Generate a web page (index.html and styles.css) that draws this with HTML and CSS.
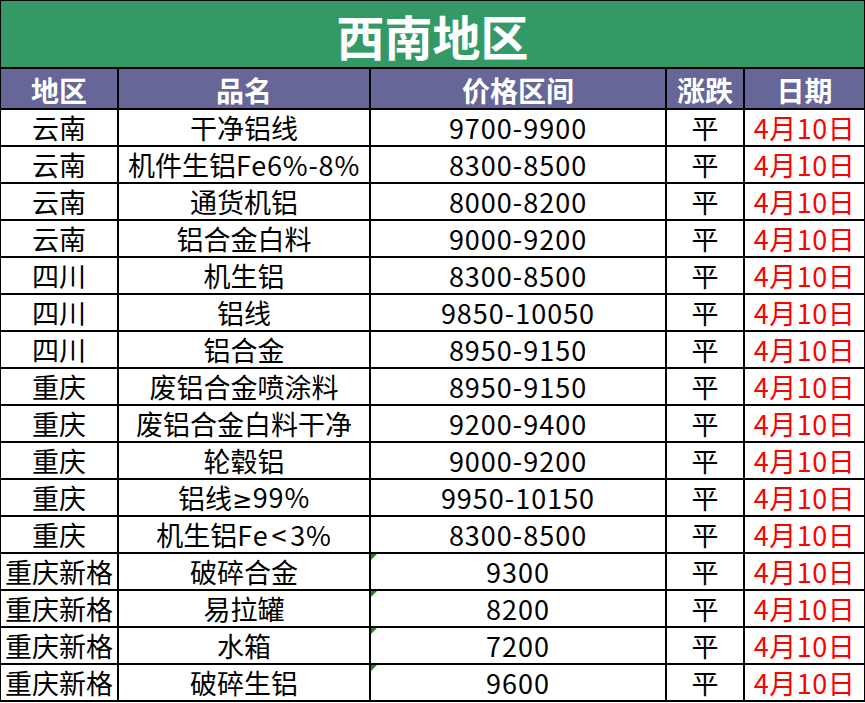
FILE: index.html
```html
<!DOCTYPE html>
<html lang="zh">
<head>
<meta charset="utf-8">
<title>西南地区</title>
<link rel="stylesheet" href="styles.css">
</head>
<body>
<div class="sheet">
  <div class="title">西南地区</div>
  <div class="hd">地区</div><div class="hd">品名</div><div class="hd">价格区间</div><div class="hd">涨跌</div><div class="hd">日期</div>

  <div class="c">云南</div><div class="c">干净铝线</div><div class="c num">9700-9900</div><div class="c">平</div><div class="c date">4月10日</div>
  <div class="c">云南</div><div class="c">机件生铝<span class="lat">Fe6%-8%</span></div><div class="c num">8300-8500</div><div class="c">平</div><div class="c date">4月10日</div>
  <div class="c">云南</div><div class="c">通货机铝</div><div class="c num">8000-8200</div><div class="c">平</div><div class="c date">4月10日</div>
  <div class="c">云南</div><div class="c">铝合金白料</div><div class="c num">9000-9200</div><div class="c">平</div><div class="c date">4月10日</div>
  <div class="c">四川</div><div class="c">机生铝</div><div class="c num">8300-8500</div><div class="c">平</div><div class="c date">4月10日</div>
  <div class="c">四川</div><div class="c">铝线</div><div class="c num">9850-10050</div><div class="c">平</div><div class="c date">4月10日</div>
  <div class="c">四川</div><div class="c">铝合金</div><div class="c num">8950-9150</div><div class="c">平</div><div class="c date">4月10日</div>
  <div class="c">重庆</div><div class="c">废铝合金喷涂料</div><div class="c num">8950-9150</div><div class="c">平</div><div class="c date">4月10日</div>
  <div class="c">重庆</div><div class="c">废铝合金白料干净</div><div class="c num">9200-9400</div><div class="c">平</div><div class="c date">4月10日</div>
  <div class="c">重庆</div><div class="c">轮毂铝</div><div class="c num">9000-9200</div><div class="c">平</div><div class="c date">4月10日</div>
  <div class="c">重庆</div><div class="c">铝线<span class="lat"><span class="sym">≥</span>99%</span></div><div class="c num">9950-10150</div><div class="c">平</div><div class="c date">4月10日</div>
  <div class="c">重庆</div><div class="c">机生铝<span class="lat">Fe<span class="lt">&lt;</span>3%</span></div><div class="c num">8300-8500</div><div class="c">平</div><div class="c date">4月10日</div>
  <div class="c">重庆新格</div><div class="c">破碎合金</div><div class="c num txt">9300</div><div class="c">平</div><div class="c date">4月10日</div>
  <div class="c">重庆新格</div><div class="c">易拉罐</div><div class="c num txt">8200</div><div class="c">平</div><div class="c date">4月10日</div>
  <div class="c">重庆新格</div><div class="c">水箱</div><div class="c num txt">7200</div><div class="c">平</div><div class="c date">4月10日</div>
  <div class="c">重庆新格</div><div class="c">破碎生铝</div><div class="c num txt">9600</div><div class="c">平</div><div class="c date">4月10日</div>
</div>
</body>
</html>
```
FILE: styles.css
```css
html, body {
  margin: 0;
  padding: 0;
  background: #ffffff;
}
.sheet {
  width: 865px;
  box-sizing: border-box;
  background: #000000;
  display: grid;
  grid-template-columns: 116px 250px 294px 76px 119px;
  grid-template-rows: 66px 39px repeat(16, 35px);
  gap: 2px;
  padding: 1px 1px 2px 1px;
  font-family: "Noto Sans CJK SC", "Noto Sans", sans-serif;
}
.title {
  grid-column: 1 / -1;
  background: #339966;
  color: #ffffff;
  font-size: 48px;
  font-weight: 700;
  display: flex;
  align-items: center;
  justify-content: center;
  line-height: 1;
  padding-top: 2px;
}
.hd {
  background: #666699;
  color: #ffffff;
  font-size: 28px;
  font-weight: 700;
  display: flex;
  align-items: center;
  justify-content: center;
  line-height: 1;
  padding-top: 2px;
}
.c {
  background: #ffffff;
  color: #000000;
  font-size: 27px;
  display: flex;
  align-items: center;
  justify-content: center;
  line-height: 1;
  white-space: nowrap;
  position: relative;
}
.num {
  letter-spacing: 1px;
}
.lat {
  letter-spacing: 0.8px;
}
.sym {
  font-family: "DejaVu Sans", "Noto Sans", sans-serif;
  font-size: 24px;
}
.lt {
  padding: 0 3px;
}
.date {
  color: #ff0000;
  letter-spacing: 0.5px;
}
.txt::before {
  content: "";
  position: absolute;
  left: 0;
  top: 0;
  width: 0;
  height: 0;
  border-top: 6px solid #1a8a1a;
  border-right: 6px solid transparent;
}
```
